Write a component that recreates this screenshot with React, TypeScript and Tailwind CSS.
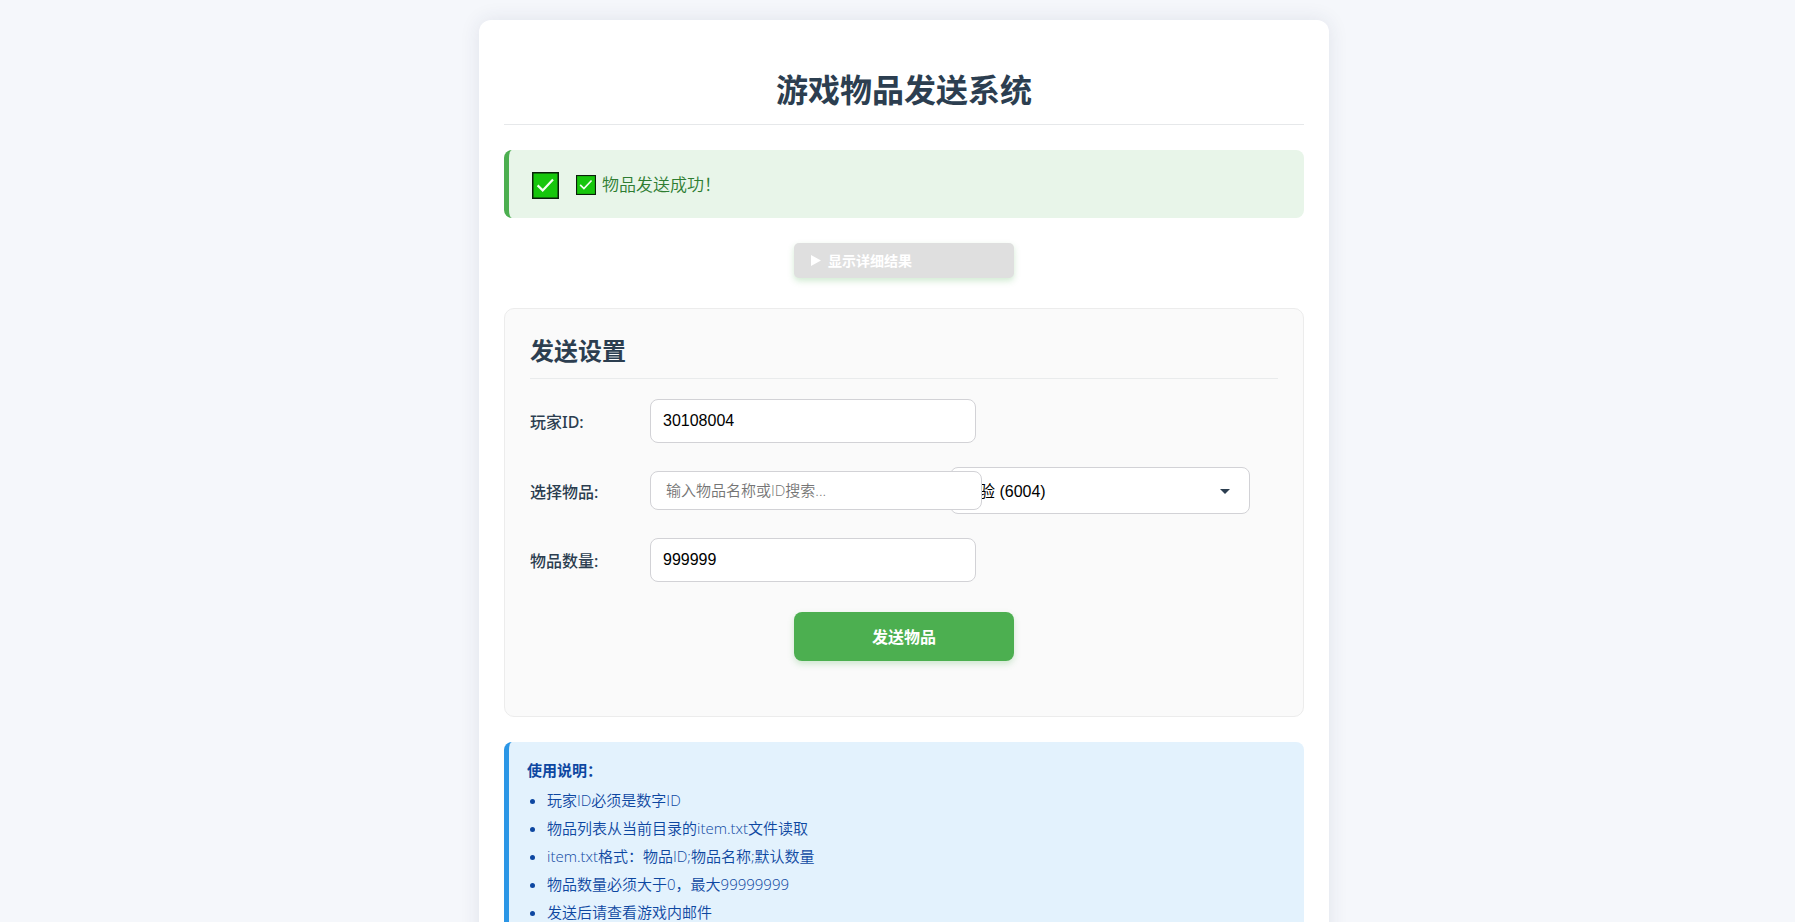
import { useState } from "react";

const notes = [
  "玩家ID必须是数字ID",
  "物品列表从当前目录的item.txt文件读取",
  "item.txt格式：物品ID;物品名称;默认数量",
  "物品数量必须大于0，最大99999999",
  "发送后请查看游戏内邮件",
];

function CheckMark({ className }: { className: string }) {
  return (
    <svg viewBox="0 0 27 27" className={className} aria-hidden="true">
      <rect x="0.75" y="0.75" width="25.5" height="25.5" fill="#16c60c" stroke="#0a1f0a" strokeWidth="1.5" />
      <path d="M5.6 13.4 L10.7 18.4 L21 7.4" fill="none" stroke="#f4fff2" strokeWidth="2.2" />
    </svg>
  );
}

const inputClass =
  "h-11 w-[326px] rounded-lg border border-[#d2d2d6] bg-white px-3 font-['Liberation_Sans','Noto_Sans_CJK_SC',sans-serif] text-base text-black";
const labelClass =
  "w-[120px] shrink-0 pt-0.5 font-['Noto_Sans','Noto_Sans_CJK_SC',sans-serif] text-base font-medium text-[#2c3e50]";

export default function App() {
  const [playerId, setPlayerId] = useState("30108004");
  const [keyword, setKeyword] = useState("");
  const [amount, setAmount] = useState("999999");

  return (
    <div className="min-h-screen bg-[#f5f7fb] py-5 pl-[13px] font-['Open_Sans','Noto_Sans_CJK_SC',sans-serif]">
      <main className="mx-auto max-w-[850px] rounded-xl bg-white px-[25px] pt-11 pb-6 shadow-[0_0_20px_rgba(40,50,90,0.1)]">
        <h1 className="mb-[25px] border-b border-[#e6e8ea] pb-2 text-center text-[32px] leading-[52px] font-bold text-[#2c3e50]">
          游戏物品发送系统
        </h1>

        <div
          role="status"
          className="mb-[25px] flex h-[68px] items-center rounded-lg border-l-[5px] border-[#4caf50] bg-[#e8f5e9] pt-0.5 pl-[23px] text-[17px] text-[#2e7d32]"
        >
          <CheckMark className="mr-[17px] size-[27px]" />
          <CheckMark className="mr-1.5 size-5" />
          <span className="font-[350]">物品发送成功！</span>
        </div>

        <button
          type="button"
          className="mx-auto mb-[30px] flex h-[35px] w-[220px] items-center gap-[7px] rounded-[5px] bg-[#dfdfdf] px-[17px] text-sm font-bold text-white shadow-[0_3px_6px_rgba(76,175,80,0.25)]"
        >
          <svg viewBox="0 0 10 11" className="h-[11px] w-[10px]" aria-hidden="true">
            <path d="M0 0 L10 5.5 L0 11 Z" fill="currentColor" />
          </svg>
          显示详细结果
        </button>

        <form
          onSubmit={(e) => e.preventDefault()}
          className="mb-[25px] rounded-[10px] border border-[#ececec] bg-[#fafafa] px-[25px] pt-[25px] pb-[55px]"
        >
          <h2 className="mb-5 border-b border-[#e9ebec] pb-[10px] text-2xl leading-[34px] font-bold text-[#2c3e50]">
            发送设置
          </h2>
          <div className="mb-6 flex items-center">
            <label htmlFor="player" className={labelClass}>
              玩家ID:
            </label>
            <input id="player" className={inputClass} value={playerId} onChange={(e) => setPlayerId(e.target.value)} />
          </div>
          <div className="mb-6 flex items-center">
            <label htmlFor="search" className={labelClass}>
              选择物品:
            </label>
            <div className="relative z-10 flex w-[300px] shrink-0">
              <input
                id="search"
                className="h-[39px] w-[332px] shrink-0 rounded-lg border border-[#d2d2d6] bg-white px-[15px] pb-0.5 text-[15px] font-[350] placeholder:text-[#757575]"
                placeholder="输入物品名称或ID搜索..."
                value={keyword}
                onChange={(e) => setKeyword(e.target.value)}
              />
            </div>
            <div className="relative w-[300px] shrink-0">
              <select
                aria-label="物品"
                className="block h-[47px] w-full appearance-none rounded-lg border border-[#d2d2d6] bg-white px-3 pt-0.5 font-['Liberation_Sans','Noto_Sans_CJK_SC',sans-serif] text-base text-black"
              >
                <option>经验 (6004)</option>
              </select>
              <svg
                viewBox="0 0 10 5"
                className="pointer-events-none absolute top-[22px] right-5 h-[5px] w-[10px]"
                aria-hidden="true"
              >
                <path d="M0 0 H10 L5 5 Z" fill="#2c3e50" />
              </svg>
            </div>
          </div>
          <div className="mb-[30px] flex items-center">
            <label htmlFor="amount" className={labelClass}>
              物品数量:
            </label>
            <input id="amount" className={inputClass} value={amount} onChange={(e) => setAmount(e.target.value)} />
          </div>
          <button
            type="submit"
            className="mx-auto block h-[49px] w-[220px] rounded-lg bg-[#4caf50] text-base font-bold text-white shadow-[0_3px_6px_rgba(76,175,80,0.25)]"
          >
            发送物品
          </button>
        </form>

        <section className="rounded-lg border-l-[5px] border-[#2b96e6] bg-[#e3f2fd] px-[18px] pt-3.5 pb-5 text-[15px] leading-7 text-[#0d47a1]">
          <h3 className="mb-[2px] font-bold">使用说明：</h3>
          <ul className="list-disc pl-5 font-[350]">
            {notes.map((note) => (
              <li key={note}>{note}</li>
            ))}
          </ul>
        </section>
      </main>
    </div>
  );
}
